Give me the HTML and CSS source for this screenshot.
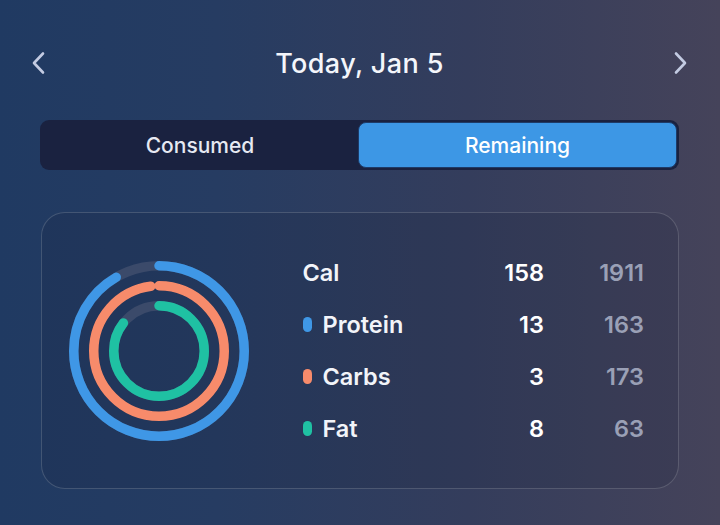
FILE: index.html
```html
<!DOCTYPE html>
<html>
<head>
<meta charset="utf-8">
<link rel="stylesheet" href="styles.css">
</head>
<body>
<div class="screen">
  <header class="header">
    <svg class="chev" width="16" height="26" viewBox="0 0 16 26"><path d="M12 3.5 L3 13 L12 22.5" fill="none" stroke="#c3cbe2" stroke-width="2.6" stroke-linecap="round" stroke-linejoin="round"/></svg>
    <h1 class="title">Today, Jan 5</h1>
    <svg class="chev" width="16" height="26" viewBox="0 0 16 26"><path d="M4 3.5 L13 13 L4 22.5" fill="none" stroke="#c3cbe2" stroke-width="2.6" stroke-linecap="round" stroke-linejoin="round"/></svg>
  </header>

  <div class="segment">
    <div class="seg">Consumed</div>
    <div class="seg active">Remaining</div>
  </div>

  <section class="card">
    <svg class="rings" width="180" height="180" viewBox="0 0 180 180">
      <g fill="none" stroke-width="9.5" transform="rotate(-90 90 90)">
        <circle cx="90" cy="90" r="85.25" stroke="#3b4a6a"/>
        <circle cx="90" cy="90" r="85.25" stroke="#3f97e6" stroke-linecap="round" stroke-dasharray="490 600"/>
        <circle cx="90" cy="90" r="65.25" stroke="#1f3154"/>
        <circle cx="90" cy="90" r="65.25" stroke="#f78b6b" stroke-linecap="round" stroke-dasharray="401 600"/>
        <circle cx="90" cy="90" r="45.25" stroke="#3b4a6a"/>
        <circle cx="90" cy="90" r="45.25" stroke="#1fc1a3" stroke-linecap="round" stroke-dasharray="243 600"/>
      </g>
    </svg>
    <div class="table">
      <div class="label">Cal</div><div class="num">158</div><div class="rem">1911</div>
      <div class="label"><span class="dot blue"></span>Protein</div><div class="num">13</div><div class="rem">163</div>
      <div class="label"><span class="dot orange"></span>Carbs</div><div class="num">3</div><div class="rem">173</div>
      <div class="label"><span class="dot green"></span>Fat</div><div class="num">8</div><div class="rem">63</div>
    </div>
  </section>
</div>
</body>
</html>
```
FILE: styles.css
```css
* { box-sizing: border-box; }
html, body { margin: 0; padding: 0; }
body {
  width: 720px;
  height: 525px;
  overflow: hidden;
  font-family: Inter, "Noto Sans", sans-serif;
  color: #ffffff;
  background: linear-gradient(90deg, #203a62 0%, #263c62 30%, #343d5c 65%, #45435a 100%);
}
.screen {
  display: flex;
  flex-direction: column;
  padding: 38px 0 0;
}
.header {
  height: 50px;
  display: flex;
  align-items: center;
  justify-content: space-between;
  padding: 0 32px 0 31px;
}
.chev { display: block; }
.title {
  margin: 0;
  font-size: 27px;
  font-weight: 500;
  letter-spacing: 0.4px;
  color: #f4f6fb;
}
.segment {
  margin: 32px 41px 0 40px;
  height: 50px;
  background: #1a2240;
  border-radius: 9px;
  padding: 2px;
  display: grid;
  grid-template-columns: 316px 1fr;
}
.seg {
  display: flex;
  align-items: center;
  justify-content: center;
  font-size: 21px;
  font-weight: 500;
  color: #e6e9f2;
  border-radius: 8px;
}
.seg.active {
  background: #3d97e5;
  color: #ffffff;
  border: 1px solid #1e3b68;
}
.card {
  margin: 42px 41px 0 41px;
  height: 277px;
  border: 1.5px solid rgba(255, 255, 255, 0.16);
  border-radius: 24px;
  background: rgba(18, 28, 52, 0.14);
  display: flex;
  align-items: center;
  padding: 0 34px 0 26.5px;
}
.rings { flex: none; display: block; }
.table {
  margin-left: 54px;
  flex: 1;
  display: grid;
  grid-template-columns: 1fr 80px 100px;
  grid-auto-rows: 52px;
  align-items: center;
  font-size: 23.5px;
  font-weight: 600;
}
.label {
  display: flex;
  align-items: center;
  color: #f2f4f9;
}
.num { text-align: right; color: #ffffff; }
.rem { text-align: right; color: #9aa0b6; }
.dot {
  width: 9px;
  height: 15px;
  border-radius: 5px;
  margin-right: 11px;
}
.dot.blue { background: #3f97e6; }
.dot.orange { background: #f78b6b; }
.dot.green { background: #1fc1a3; }
```
